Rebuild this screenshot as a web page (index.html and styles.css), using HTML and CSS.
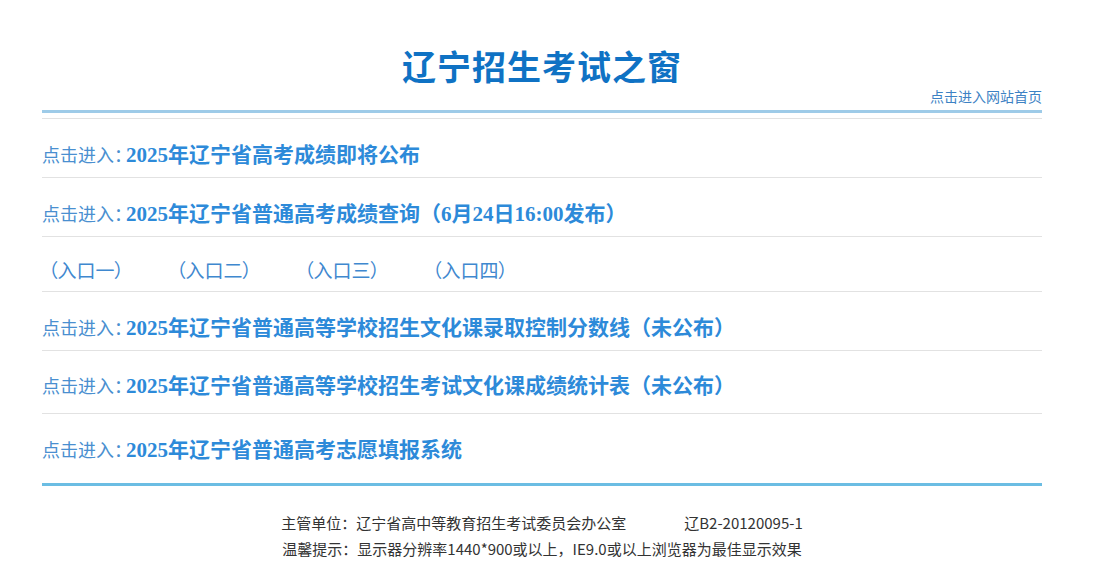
FILE: index.html
```html
<!DOCTYPE html>
<html lang="zh-CN">
<head>
<meta charset="utf-8">
<title>辽宁招生考试之窗</title>
<link rel="stylesheet" href="styles.css">
</head>
<body>
<div class="page">
  <header class="header">
    <h1 class="title">辽宁招生考试之窗</h1>
    <div class="home"><a href="#">点击进入网站首页</a></div>
    <div class="rule-top"></div>
  </header>
  <ul class="list">
    <li class="row"><span class="label">点击进入：</span><a class="link" href="#">2025年辽宁省高考成绩即将公布</a></li>
    <li class="row"><span class="label">点击进入：</span><a class="link" href="#">2025年辽宁省普通高考成绩查询（6月24日16:00发布）</a></li>
    <li class="row row-entries">
      <a class="entry" href="#">（入口一）</a>
      <a class="entry" href="#">（入口二）</a>
      <a class="entry" href="#">（入口三）</a>
      <a class="entry" href="#">（入口四）</a>
    </li>
    <li class="row"><span class="label">点击进入：</span><a class="link" href="#">2025年辽宁省普通高等学校招生文化课录取控制分数线（未公布）</a></li>
    <li class="row row-tall"><span class="label">点击进入：</span><a class="link" href="#">2025年辽宁省普通高等学校招生考试文化课成绩统计表（未公布）</a></li>
    <li class="row row-last"><span class="label">点击进入：</span><a class="link" href="#">2025年辽宁省普通高考志愿填报系统</a></li>
  </ul>
  <footer class="footer">
    <p class="foot-line"><span>主管单位：辽宁省高中等教育招生考试委员会办公室</span><span class="license">辽B2-20120095-1</span></p>
    <p class="foot-line">温馨提示：显示器分辨率1440*900或以上，IE9.0或以上浏览器为最佳显示效果</p>
  </footer>
</div>
</body>
</html>
```
FILE: styles.css
```css
html, body {
  margin: 0;
  padding: 0;
  background: #ffffff;
}
body {
  padding-right: 10px;
  font-family: "Noto Sans CJK SC", sans-serif;
}
a {
  text-decoration: none;
}
.page {
  width: 1000px;
  margin: 0 auto;
  padding-top: 46px;
}
.header {
  display: flex;
  flex-direction: column;
}
.title {
  margin: 0;
  height: 40px;
  text-align: center;
  font-family: "Noto Sans CJK SC", sans-serif;
  font-size: 34px;
  font-weight: 700;
  line-height: 40px;
  color: #0f72c4;
  letter-spacing: 1px;
}
.home {
  height: 18px;
  text-align: right;
  font-size: 14px;
  line-height: 18px;
  margin-top: 1px;
}
.home a {
  color: #3d82c4;
}
.rule-top {
  margin-top: 5px;
  height: 3px;
  background: #9ecbe8;
}
.list {
  list-style: none;
  margin: 5px 0 0;
  padding: 0;
  border-top: 1px solid #e2e2e2;
  border-bottom: 3px solid #6bbde3;
}
.row {
  display: flex;
  align-items: baseline;
  height: 26px;
  padding: 23px 0 9px;
  border-bottom: 1px solid #e2e2e2;
}
.row-entries {
  padding: 20px 0 8px;
}
.row-tall {
  padding: 22px 0 14px;
}
.row-last {
  border-bottom: none;
  padding: 23px 0 20px;
}
.label {
  height: 26px;
  line-height: 26px;
  font-family: "Liberation Serif", "Noto Sans CJK SC", serif;
  font-size: 18px;
  font-feature-settings: "palt";
  color: #4a8fd0;
  margin-right: 3px;
}
.link {
  height: 26px;
  line-height: 26px;
  font-family: "Liberation Serif", "Noto Sans CJK SC", serif;
  font-size: 21px;
  font-weight: 700;
  color: #2d8ad9;
}
.entry {
  width: 128px;
  padding-left: 6px;
  box-sizing: border-box;
  height: 26px;
  line-height: 26px;
  font-family: "Noto Sans CJK SC", sans-serif;
  font-size: 19px;
  font-feature-settings: "palt";
  color: #3f88cf;
}
.footer {
  padding-top: 24px;
  text-align: center;
  color: #333333;
  font-size: 15px;
}
.foot-line {
  margin: 0;
  height: 26px;
  line-height: 26px;
}
.license {
  margin-left: 58px;
}
```
